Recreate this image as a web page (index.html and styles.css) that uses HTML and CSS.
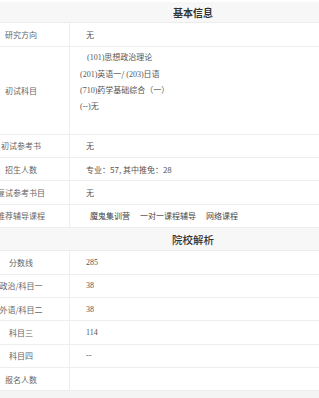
FILE: index.html
```html
<!DOCTYPE html>
<html lang="zh-CN">
<head>
<meta charset="utf-8">
<title>院校信息</title>
<link rel="stylesheet" href="styles.css">
</head>
<body>
<div class="page">
  <div class="table">
    <div class="sec-head first">基本信息</div>
    <div class="row"><div class="label">研究方向</div><div class="value">无</div></div>
    <div class="row tall">
      <div class="label">初试科目</div>
      <div class="value lines">
        <div class="line indent"><span class="num">(101)</span>思想政治理论</div>
        <div class="line"><span class="num">(201)</span>英语一/ <span class="num">(203)</span>日语</div>
        <div class="line"><span class="num">(710)</span>药学基础综合（一）</div>
        <div class="line"><span class="num">(--)</span>无</div>
        <div class="line"></div>
      </div>
    </div>
    <div class="row"><div class="label">初试参考书</div><div class="value">无</div></div>
    <div class="row"><div class="label">招生人数</div><div class="value">专业：57, 其中推免：28</div></div>
    <div class="row"><div class="label">复试参考书目</div><div class="value">无</div></div>
    <div class="row"><div class="label">推荐辅导课程</div><div class="value courses"><span class="course">魔鬼集训营</span><span class="course">一对一课程辅导</span><span class="course">网络课程</span></div></div>
    <div class="sec-head second">院校解析</div>
    <div class="row"><div class="label">分数线</div><div class="value num">285</div></div>
    <div class="row"><div class="label">政治/科目一</div><div class="value num">38</div></div>
    <div class="row"><div class="label">外语/科目二</div><div class="value num">38</div></div>
    <div class="row"><div class="label">科目三</div><div class="value num">114</div></div>
    <div class="row"><div class="label">科目四</div><div class="value num">--</div></div>
    <div class="row"><div class="label">报名人数</div><div class="value"></div></div>
    <div class="sec-foot"></div>
  </div>
</div>
</body>
</html>
```
FILE: styles.css
```css
html, body {
  margin: 0;
  padding: 0;
  background: #fff;
}
.page {
  width: 319px;
  height: 398px;
  overflow: hidden;
}
.table {
  width: 440px;
  margin-left: -27px;
  font-family: "Noto Sans CJK SC", "Noto Sans", sans-serif;
  font-size: 8px;
  color: #666;
}
.sec-head {
  box-sizing: border-box;
  height: 23.35px;
  display: flex;
  align-items: center;
  justify-content: center;
  background: #f7f7f7;
  border-bottom: 1px solid #ececec;
  font-size: 10px;
  color: #333;
}
.sec-head.first {
  border-top: 2px solid #fff;
  font-weight: bold;
}
.sec-head.second {
  font-size: 10.5px;
  font-weight: 500;
}
.row {
  box-sizing: border-box;
  display: grid;
  grid-template-columns: 97px 1fr;
  min-height: 23.35px;
  border-bottom: 1px solid #eeeeee;
}
.row.tall {
  height: 88px;
}
.label {
  box-sizing: border-box;
  display: flex;
  align-items: center;
  justify-content: center;
  white-space: nowrap;
  border-right: 1px solid #eeeeee;
  color: #666;
}
.value {
  display: flex;
  align-items: center;
  padding-left: 16px;
  color: #555;
  white-space: nowrap;
}
.value.lines {
  flex-direction: column;
  align-items: flex-start;
  justify-content: center;
  padding-left: 10px;
}
.line {
  height: 16.3px;
  line-height: 16.3px;
}
.line.indent {
  padding-left: 7px;
}
.num {
  font-family: "Liberation Serif", "Noto Sans CJK SC", serif;
}
.courses {
  padding-left: 20px;
  color: #444;
}
.course {
  margin-right: 10px;
}
.sec-foot {
  height: 20px;
  background: #f4f4f4;
}
```
